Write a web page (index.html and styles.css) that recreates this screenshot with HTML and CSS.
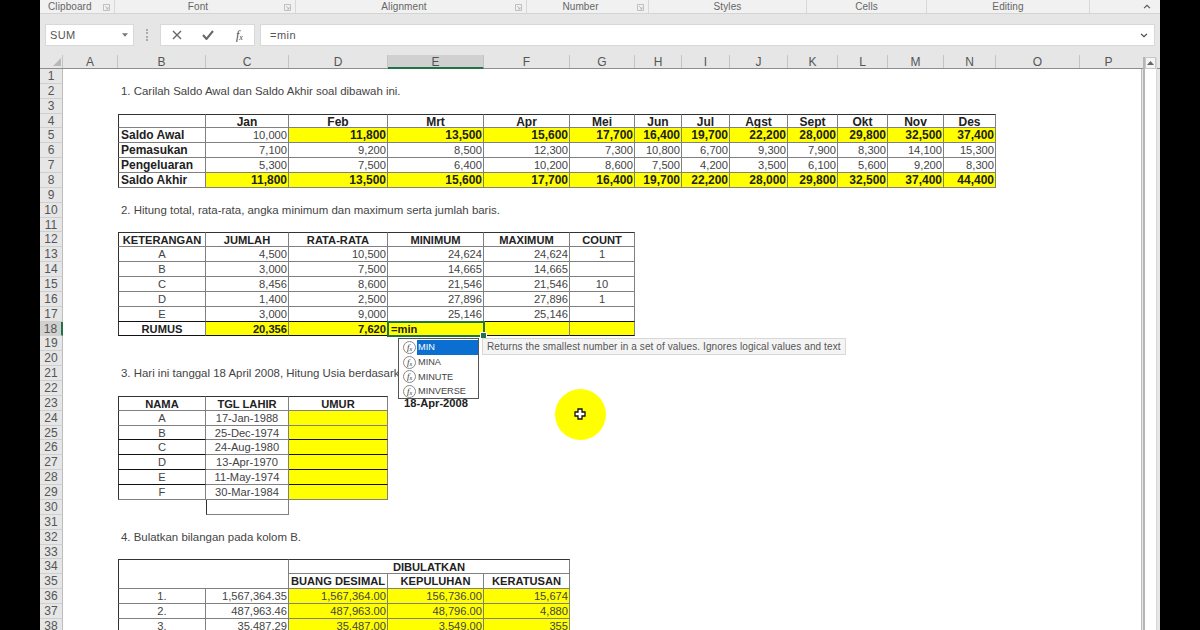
FILE: index.html
```html
<!DOCTYPE html>
<html lang="id">
<head>
<meta charset="utf-8">
<title>Excel - Latihan</title>
<link rel="stylesheet" href="styles.css">
</head>
<body>
<div class="app">
  <div class="ribbon">
    <div class="group g-clip"><span>Clipboard</span><svg class="launch" viewBox="0 0 7 7"><path d="M.5 .5h6v6h-6z M2 2l3 3M5 3v2H3"/></svg></div>
    <div class="group g-font"><span>Font</span><svg class="launch" viewBox="0 0 7 7"><path d="M.5 .5h6v6h-6z M2 2l3 3M5 3v2H3"/></svg></div>
    <div class="group g-align"><span>Alignment</span><svg class="launch" viewBox="0 0 7 7"><path d="M.5 .5h6v6h-6z M2 2l3 3M5 3v2H3"/></svg></div>
    <div class="group g-num"><span>Number</span><svg class="launch" viewBox="0 0 7 7"><path d="M.5 .5h6v6h-6z M2 2l3 3M5 3v2H3"/></svg></div>
    <div class="group g-styles"><span>Styles</span></div>
    <div class="group g-cells"><span>Cells</span></div>
    <div class="group g-edit"><span>Editing</span></div>
    <div class="collapse"><svg viewBox="0 0 9 6"><path d="M1 5l3.500-3.500L8 5"/></svg></div>
  </div>

  <div class="fbar">
    <div class="namebox"><span>SUM</span><svg viewBox="0 0 7 4"><path d="M0 0h7L3.500 4z"/></svg></div>
    <div class="grip"></div>
    <div class="fbtns">
      <svg class="ic-x" viewBox="0 0 10 10"><path d="M1 1l8 8M9 1l-8 8"/></svg>
      <svg class="ic-ok" viewBox="0 0 12 10"><path d="M1 5l3.500 4L11 1"/></svg>
      <i class="fxlabel">f<sub>x</sub></i>
    </div>
    <div class="finput"><span>=min</span><svg viewBox="0 0 9 6"><path d="M1 1l3.500 3.500L8 1"/></svg></div>
  </div>

  <div class="row colhead">
    <span class="corner"><svg viewBox="0 0 8 8"><path d="M8 0v8H0z"/></svg></span>
    <span>A</span><span>B</span><span>C</span><span>D</span><span class="sel">E</span><span>F</span><span>G</span><span>H</span><span>I</span><span>J</span><span>K</span><span>L</span><span>M</span><span>N</span><span>O</span><span>P</span>
  </div>

  <div class="main">
    <div class="sheet">
      <div class="row"><span class="rh">1</span></div>
      <div class="row"><span class="rh">2</span><span class="cell cb pad over">1. Carilah Saldo Awal dan Saldo Akhir soal dibawah ini.</span></div>
      <div class="row"><span class="rh">3</span></div>
      <div class="row t1"><span class="rh">4</span><span class="cell cb fl ft"></span><span class="cell ft ctr bold">Jan</span><span class="cell ft ctr bold">Feb</span><span class="cell ft ctr bold">Mrt</span><span class="cell ft ctr bold">Apr</span><span class="cell ft ctr bold">Mei</span><span class="cell ft ctr bold">Jun</span><span class="cell ft ctr bold">Jul</span><span class="cell ft ctr bold">Agst</span><span class="cell ft ctr bold">Sept</span><span class="cell ft ctr bold">Okt</span><span class="cell ft ctr bold">Nov</span><span class="cell ft ctr bold">Des</span></div>
      <div class="row t1"><span class="rh">5</span><span class="cell cb fl pad bold">Saldo Awal</span><span class="cell num">10,000</span><span class="cell num y bold">11,800</span><span class="cell num y bold">13,500</span><span class="cell num y bold">15,600</span><span class="cell num y bold">17,700</span><span class="cell num y bold">16,400</span><span class="cell num y bold">19,700</span><span class="cell num y bold">22,200</span><span class="cell num y bold">28,000</span><span class="cell num y bold">29,800</span><span class="cell num y bold">32,500</span><span class="cell num y bold">37,400</span></div>
      <div class="row t1"><span class="rh">6</span><span class="cell cb fl pad bold">Pemasukan</span><span class="cell num">7,100</span><span class="cell num">9,200</span><span class="cell num">8,500</span><span class="cell num">12,300</span><span class="cell num">7,300</span><span class="cell num">10,800</span><span class="cell num">6,700</span><span class="cell num">9,300</span><span class="cell num">7,900</span><span class="cell num">8,300</span><span class="cell num">14,100</span><span class="cell num">15,300</span></div>
      <div class="row t1"><span class="rh">7</span><span class="cell cb fl pad bold">Pengeluaran</span><span class="cell num">5,300</span><span class="cell num">7,500</span><span class="cell num">6,400</span><span class="cell num">10,200</span><span class="cell num">8,600</span><span class="cell num">7,500</span><span class="cell num">4,200</span><span class="cell num">3,500</span><span class="cell num">6,100</span><span class="cell num">5,600</span><span class="cell num">9,200</span><span class="cell num">8,300</span></div>
      <div class="row t1"><span class="rh">8</span><span class="cell cb fl pad bold">Saldo Akhir</span><span class="cell num y bold">11,800</span><span class="cell num y bold">13,500</span><span class="cell num y bold">15,600</span><span class="cell num y bold">17,700</span><span class="cell num y bold">16,400</span><span class="cell num y bold">19,700</span><span class="cell num y bold">22,200</span><span class="cell num y bold">28,000</span><span class="cell num y bold">29,800</span><span class="cell num y bold">32,500</span><span class="cell num y bold">37,400</span><span class="cell num y bold">44,400</span></div>
      <div class="row"><span class="rh">9</span></div>
      <div class="row"><span class="rh">10</span><span class="cell cb pad over">2. Hitung total, rata-rata, angka minimum dan maximum serta jumlah baris.</span></div>
      <div class="row"><span class="rh">11</span></div>
      <div class="row"><span class="rh">12</span><span class="cell cb fl ft ctr bold">KETERANGAN</span><span class="cell ft ctr bold">JUMLAH</span><span class="cell ft ctr bold">RATA-RATA</span><span class="cell ft ctr bold">MINIMUM</span><span class="cell ft ctr bold">MAXIMUM</span><span class="cell ft ctr bold">COUNT</span></div>
      <div class="row"><span class="rh">13</span><span class="cell cb fl ctr">A</span><span class="cell num">4,500</span><span class="cell num">10,500</span><span class="cell num">24,624</span><span class="cell num">24,624</span><span class="cell ctr">1</span></div>
      <div class="row"><span class="rh">14</span><span class="cell cb fl ctr">B</span><span class="cell num">3,000</span><span class="cell num">7,500</span><span class="cell num">14,665</span><span class="cell num">14,665</span><span class="cell ctr"></span></div>
      <div class="row"><span class="rh">15</span><span class="cell cb fl ctr">C</span><span class="cell num">8,456</span><span class="cell num">8,600</span><span class="cell num">21,546</span><span class="cell num">21,546</span><span class="cell ctr">10</span></div>
      <div class="row"><span class="rh">16</span><span class="cell cb fl ctr">D</span><span class="cell num">1,400</span><span class="cell num">2,500</span><span class="cell num">27,896</span><span class="cell num">27,896</span><span class="cell ctr">1</span></div>
      <div class="row"><span class="rh">17</span><span class="cell cb fl ctr dk">E</span><span class="cell num dk">3,000</span><span class="cell num dk">9,000</span><span class="cell num dk">25,146</span><span class="cell num dk">25,146</span><span class="cell ctr dk"></span></div>
      <div class="row"><span class="rh rsel">18</span><span class="cell cb fl ctr bold dk">RUMUS</span><span class="cell num y bold dk">20,356</span><span class="cell num y bold dk">7,620</span><span class="cell y bold active">=min</span><span class="cell num y dk"></span><span class="cell num y dk"></span></div>
      <div class="row"><span class="rh">19</span></div>
      <div class="row"><span class="rh">20</span></div>
      <div class="row"><span class="rh">21</span><span class="cell cb pad over">3. Hari ini tanggal 18 April 2008, Hitung Usia berdasarkan</span></div>
      <div class="row"><span class="rh">22</span></div>
      <div class="row"><span class="rh">23</span><span class="cell cb fl ft ctr bold">NAMA</span><span class="cell ft ctr bold">TGL LAHIR</span><span class="cell ft ctr bold">UMUR</span><span class="plain ctr bold">18-Apr-2008</span></div>
      <div class="row"><span class="rh">24</span><span class="cell cb fl ctr">A</span><span class="cell ctr">17-Jan-1988</span><span class="cell y"></span></div>
      <div class="row"><span class="rh">25</span><span class="cell cb fl ctr dk">B</span><span class="cell ctr">25-Dec-1974</span><span class="cell y dk"></span></div>
      <div class="row"><span class="rh">26</span><span class="cell cb fl ctr dk">C</span><span class="cell ctr">24-Aug-1980</span><span class="cell y dk"></span></div>
      <div class="row"><span class="rh">27</span><span class="cell cb fl ctr dk">D</span><span class="cell ctr">13-Apr-1970</span><span class="cell y dk"></span></div>
      <div class="row"><span class="rh">28</span><span class="cell cb fl ctr dk">E</span><span class="cell ctr">11-May-1974</span><span class="cell y dk"></span></div>
      <div class="row"><span class="rh">29</span><span class="cell cb fl ctr">F</span><span class="cell ctr">30-Mar-1984</span><span class="cell y"></span></div>
      <div class="row"><span class="rh">30</span><span class="cell cc fl"></span></div>
      <div class="row"><span class="rh">31</span></div>
      <div class="row"><span class="rh">32</span><span class="cell cb pad over">4. Bulatkan bilangan pada kolom B.</span></div>
      <div class="row"><span class="rh">33</span></div>
      <div class="row"><span class="rh">34</span><span class="cell cb span2 fl ft nob"></span><span class="cell span3 ft ctr bold">DIBULATKAN</span></div>
      <div class="row"><span class="rh">35</span><span class="cell cb span2 fl"></span><span class="cell ctr bold">BUANG DESIMAL</span><span class="cell ctr bold">KEPULUHAN</span><span class="cell ctr bold">KERATUSAN</span></div>
      <div class="row"><span class="rh">36</span><span class="cell cb fl ctr">1.</span><span class="cell num">1,567,364.35</span><span class="cell num y">1,567,364.00</span><span class="cell num y">156,736.00</span><span class="cell num y">15,674</span></div>
      <div class="row"><span class="rh">37</span><span class="cell cb fl ctr">2.</span><span class="cell num">487,963.46</span><span class="cell num y">487,963.00</span><span class="cell num y">48,796.00</span><span class="cell num y">4,880</span></div>
      <div class="row"><span class="rh">38</span><span class="cell cb fl ctr">3.</span><span class="cell num">35,487.29</span><span class="cell num y">35,487.00</span><span class="cell num y">3,549.00</span><span class="cell num y">355</span></div>
    </div>
    <div class="scrollbar"><div class="sb-up"><svg viewBox="0 0 7 4"><path d="M3.500 0L7 4H0z"/></svg></div></div>
  </div>

  <ul class="autocomplete">
    <li class="on"><span class="fn">f<sub>x</sub></span><span>MIN</span></li>
    <li><span class="fn">f<sub>x</sub></span><span>MINA</span></li>
    <li><span class="fn">f<sub>x</sub></span><span>MINUTE</span></li>
    <li><span class="fn">f<sub>x</sub></span><span>MINVERSE</span></li>
  </ul>
  <div class="tip">Returns the smallest number in a set of values. Ignores logical values and text</div>
  <div class="pointer"><svg viewBox="0 0 12 12"><path d="M4 1h4v3h3v4H8v3H4V8H1V4h3z"/></svg></div>
</div>
</body>
</html>
```

FILE: styles.css
```css
* { box-sizing: border-box; }
html, body { margin: 0; height: 630px; overflow: hidden; background: #000; }
body { font-family: "Liberation Sans", Arial, sans-serif; color: #222; }

.app { position: relative; width: 1120px; height: 630px; margin-left: 40px; overflow: hidden; background: #e6e6e6; }

/* Ribbon foot */
.ribbon { display: flex; height: 14px; background: #f1f1f1; border-bottom: 1px solid #d4d4d4; font-size: 10px; letter-spacing: .1px; color: #666; }
.group { position: relative; display: flex; justify-content: center; align-items: center; height: 13px; border-right: 1px solid #d8d8d8; }
.g-clip { width: 75px; justify-content: flex-start; padding-left: 8px; }
.g-font { width: 181px; padding-right: 14px; }
.g-align { width: 231px; padding-right: 14px; }
.g-num { width: 122px; padding-right: 14px; }
.g-styles { width: 158px; }
.g-cells { width: 120px; }
.g-edit { width: 163px; }
.launch { position: absolute; right: 4px; top: 4px; width: 7px; height: 7px; fill: none; stroke: #aaa; stroke-width: .7; }
.collapse { flex: 1; display: flex; justify-content: flex-end; align-items: center; }
.collapse svg { width: 8px; height: 5px; fill: none; stroke: #555; stroke-width: 1.3; margin-right: 9px; }

/* Formula bar */
.fbar { display: flex; height: 41px; padding: 10px 5px 9px; font-size: 11px; color: #555; }
.namebox { display: flex; justify-content: space-between; align-items: center; width: 89px; height: 22px; padding: 0 5px 0 4px; background: #fff; border: 1px solid #d8d8d8; letter-spacing: .3px; }
.namebox svg { width: 6px; height: 4px; fill: #777; }
.grip { width: 2px; height: 12px; margin: 5px 12px 0 12px; border-left: 2px dotted #aaa; }
.fbtns { display: flex; align-items: center; width: 95px; height: 22px; padding-left: 11px; background: #fff; border: 1px solid #d8d8d8; }
.ic-x { width: 10px; height: 10px; fill: none; stroke: #666; stroke-width: 1.4; margin-right: 20px; }
.ic-ok { width: 12px; height: 10px; fill: none; stroke: #666; stroke-width: 2; margin-right: 22px; }
.fxlabel { font-family: "Liberation Serif", serif; font-size: 12px; color: #444; }
.fxlabel sub { font-size: 8px; vertical-align: -1px; }
.finput { flex: 1; display: flex; justify-content: space-between; align-items: center; height: 22px; margin-left: 5px; padding: 0 6px 0 9px; background: #fff; border: 1px solid #d8d8d8; letter-spacing: .5px; }
.finput svg { width: 8px; height: 5px; fill: none; stroke: #444; stroke-width: 1.4; }

/* Grid rows */
.row { display: grid; grid-template-columns: 23px 55px 88px 83px 99px 96px 86px 65px 47px 48px 58px 50px 50px 56px 52px 84px 57px 4px; grid-template-rows: 14.87px; height: 14.87px; }

.colhead { height: 14px; grid-template-rows: 13px; font-size: 12px; line-height: 14px; color: #555; text-align: center; border-bottom: 1px solid #8e8e8e; }
.colhead > span { border-right: 1px solid #c4c4c4; }
.colhead > span:nth-child(n+17) { border-right: 0; }
.corner { position: relative; }
.corner svg { position: absolute; left: 13px; top: 3px; width: 8px; height: 8px; fill: #b8b8b8; }
.colhead .sel { background: #d0d0d0; border-bottom: 2px solid #217346; height: 14px; color: #555; }

.main { position: relative; width: 1120px; }
.sheet { width: 1102px; background: linear-gradient(to right, #e6e6e6 23px, #fff 23px); border-right: 1px solid #bbb; }
.scrollbar { position: absolute; left: 1103px; top: -12px; width: 14px; height: 620px; background: #fff; border-left: 2px solid #b5b5b5; border-right: 1px solid #d8d8d8; }
.sb-up { display: flex; justify-content: center; align-items: center; height: 12px; background: #f4f4f4; border: 1px solid #c8c8c8; }
.sb-up svg { width: 7px; height: 4px; fill: #666; }

.rh { font-size: 12px; line-height: 15.5px; text-align: center; color: #555; background: #e6e6e6; border-right: 1px solid #bcbcbc; border-bottom: 1px solid #cfcfcf; }
.rsel { background: #d0d0d0; border-right: 2px solid #217346; }

.cell, .plain { font-size: 11.150px; line-height: 15.500px; white-space: nowrap; color: #444; min-width: 0; }
.cell { border-right: 1px solid #808080; border-bottom: 1px solid #808080; }
.cb { grid-column: 3; }
.cc { grid-column: 4; }
.span2 { grid-column: 3 / span 2; }
.span3 { grid-column: span 3; }
.fl { border-left: 1px solid #333; }
.ft { border-top: 1px solid #333; line-height: 14px; }
.nob { border-bottom: 0; }
.dk { border-bottom-color: #111; }
.ctr { text-align: center; }
.num { text-align: right; padding-right: 1px; }
.pad { padding-left: 2px; }
.bold { font-weight: 700; color: #222; }
.t1 .bold { font-size: 12px; }
.y { background: #ff0; }
.over { border: 0; padding-left: 3px; font-size: 11.450px; overflow: visible; }
.active { position: relative; padding-left: 3px; border: 0; outline: 2px solid #217346; outline-offset: -1px; }
.active::after { content: ""; position: absolute; right: -3px; bottom: -3px; width: 5px; height: 5px; background: #217346; border: 1px solid #fff; }

/* Autocomplete + tooltip */
.autocomplete { position: absolute; left: 358px; top: 338px; width: 81px; height: 61px; margin: 0; padding: 1px 0 1px 1px; list-style: none; background: #fff; border: 1px solid #555; font-size: 9.200px; color: #444; }
.autocomplete li { display: flex; align-items: center; height: 14.800px; }
.autocomplete li > span:last-child { flex: 1; padding-left: 1px; line-height: 14.800px; }
.autocomplete .on > span:last-child { background: #0a6fd0; color: #fff; }
.fn { flex: none; width: 13px; height: 13px; margin: 0 1px 0 3px; border: 1px solid #888; border-radius: 50%; font: italic 9px/11px "Liberation Serif", serif; text-align: center; color: #333; }
.fn sub { font-size: 6px; vertical-align: -1px; line-height: 0; }
.tip { position: absolute; left: 442px; top: 338px; width: 364px; height: 17px; padding-left: 4px; background: #f4f4f4; border: 1px solid #d8d8d8; font-size: 10px; line-height: 15px; letter-spacing: .1px; color: #555; white-space: nowrap; }

.pointer { position: absolute; left: 514.500px; top: 388.500px; display: flex; justify-content: center; align-items: center; width: 51px; height: 51px; border-radius: 50%; background: #ff0; }
.pointer svg { width: 12px; height: 12px; fill: #fff; stroke: #111; stroke-width: 1.300; }
```
